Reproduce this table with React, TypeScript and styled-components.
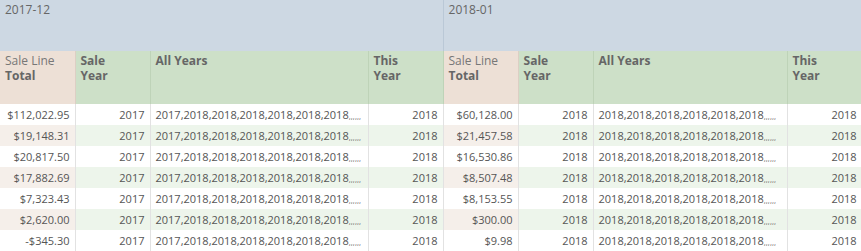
import { createGlobalStyle, styled } from "styled-components";

const GlobalStyle = createGlobalStyle`
  body {
    margin: 0;
    background: #ffffff;
    font-family: "Open Sans", "Liberation Sans", sans-serif;
  }
`;

type Row = { total: string; year: string; all: string; thisYear: string };

const groups: { label: string; rows: Row[]; allWidth: number }[] = [
  {
    label: "2017-12",
    allWidth: 218,
    rows: [
      "$112,022.95",
      "$19,148.31",
      "$20,817.50",
      "$17,882.69",
      "$7,323.43",
      "$2,620.00",
      "-$345.30",
    ].map((total) => ({
      total,
      year: "2017",
      all: "2017,2018,2018,2018,2018,2018,2018",
      thisYear: "2018",
    })),
  },
  {
    label: "2018-01",
    allWidth: 194,
    rows: [
      "$60,128.00",
      "$21,457.58",
      "$16,530.86",
      "$8,507.48",
      "$8,153.55",
      "$300.00",
      "$9.98",
    ].map((total) => ({
      total,
      year: "2018",
      all: "2018,2018,2018,2018,2018,2018",
      thisYear: "2018",
    })),
  },
];

function App() {
  const rowCount = groups[0].rows.length;

  return (
    <>
      <GlobalStyle />
      <Table>
        <colgroup>
          {groups.map((g) => [
            <col key={g.label + "a"} style={{ width: 75 }} />,
            <col key={g.label + "b"} style={{ width: 75 }} />,
            <col key={g.label + "c"} style={{ width: g.allWidth }} />,
            <col key={g.label + "d"} style={{ width: 75 }} />,
          ])}
        </colgroup>
        <thead>
          <tr>
            {groups.map((g) => (
              <GroupHead key={g.label} colSpan={4}>
                {g.label}
              </GroupHead>
            ))}
          </tr>
          <tr>
            {groups.map((g) => [
              <ColHead key={g.label + "1"} $measure>
                <Light>Sale Line</Light>
                <br />
                Total
              </ColHead>,
              <ColHead key={g.label + "2"}>
                Sale
                <br />
                Year
              </ColHead>,
              <ColHead key={g.label + "3"}>All Years</ColHead>,
              <ColHead key={g.label + "4"}>
                This
                <br />
                Year
              </ColHead>,
            ])}
          </tr>
        </thead>
        <tbody>
          {Array.from({ length: rowCount }).map((_, i) => (
            <tr key={i}>
              {groups.map((g) => {
                const r = g.rows[i];
                const odd = i % 2 === 1;
                return [
                  <Cell key={g.label + "t"} $measure $odd={odd} $right>
                    {r.total}
                  </Cell>,
                  <Cell key={g.label + "y"} $odd={odd} $right>
                    {r.year}
                  </Cell>,
                  <Cell key={g.label + "a"} $odd={odd}>
                    {r.all}
                    <Commas>,,,,,,</Commas>
                  </Cell>,
                  <Cell key={g.label + "n"} $odd={odd} $right>
                    {r.thisYear}
                  </Cell>,
                ];
              })}
            </tr>
          ))}
        </tbody>
      </Table>
    </>
  );
}

export default App;

const Table = styled.table`
  border-collapse: collapse;
  table-layout: fixed;
  width: 862px;
  font-size: 11px;
  color: #555555;
`;

const GroupHead = styled.th`
  height: 51px;
  box-sizing: border-box;
  padding: 2px 5px 0;
  background: #cdd8e3;
  border-right: 1px solid #bac8d6;
  text-align: left;
  vertical-align: top;
  font-weight: normal;
  font-size: 12px;
  line-height: 16px;
  color: #666666;
`;

const ColHead = styled.th<{ $measure?: boolean }>`
  height: 53px;
  box-sizing: border-box;
  padding: 2px 5px 0;
  background: ${(p) => (p.$measure ? "#ede0d6" : "#cde0c8")};
  border-right: 1px solid ${(p) => (p.$measure ? "#dccfc4" : "#bed3b8")};
  text-align: left;
  vertical-align: top;
  font-weight: bold;
  font-size: 12px;
  line-height: 15px;
  color: #666666;
`;

const Light = styled.span`
  font-weight: normal;
  color: #777777;
`;

const Cell = styled.td<{ $measure?: boolean; $odd?: boolean; $right?: boolean }>`
  height: 21px;
  padding: 0 5px;
  box-sizing: border-box;
  line-height: 20px;
  white-space: nowrap;
  overflow: hidden;
  text-align: ${(p) => (p.$right ? "right" : "left")};
  border-right: 1px solid #e2e2e2;
  background: ${(p) =>
    p.$odd ? (p.$measure ? "#f5efea" : "#edf5eb") : "#ffffff"};
`;

const Commas = styled.span`
  font-size: 8px;
  line-height: 1;
  color: #666666;
`;
